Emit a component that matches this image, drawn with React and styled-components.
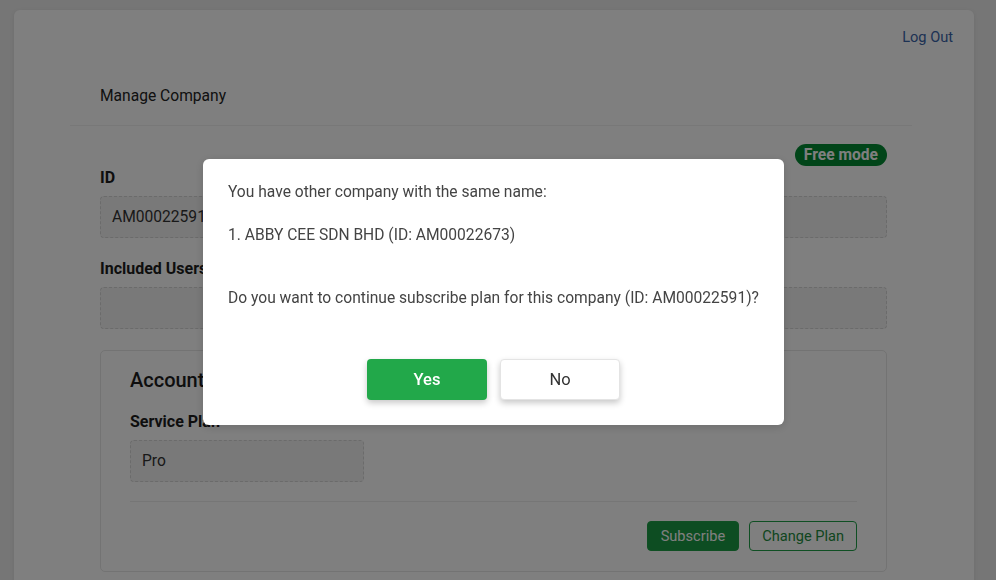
import React from 'react';
import styled, { createGlobalStyle } from 'styled-components';

const GlobalStyle = createGlobalStyle`
  html, body {
    margin: 0;
    padding: 0;
    background: #ececec;
    font-family: Roboto, "Liberation Sans", Arial, sans-serif;
    color: #222;
  }
`;

export default function App() {
  return (
    <>
      <GlobalStyle />
      <Page>
        <MainCard>
          <TopBar>
            <LogOut href="#">Log Out</LogOut>
          </TopBar>
          <Section>
            <SectionHeader>Manage Company</SectionHeader>
            <SectionBody>
              <BadgeRow>
                <Badge>Free mode</Badge>
              </BadgeRow>
              <Field>
                <Label>ID</Label>
                <ReadOnly>AM00022591</ReadOnly>
              </Field>
              <Field>
                <Label>Included Users</Label>
                <ReadOnly />
              </Field>
              <AccountCard>
                <CardTitle>Account</CardTitle>
                <Field>
                  <Label>Service Plan</Label>
                  <ReadOnly narrow>Pro</ReadOnly>
                </Field>
                <CardFooter>
                  <SmallButton solid>Subscribe</SmallButton>
                  <SmallButton>Change Plan</SmallButton>
                </CardFooter>
              </AccountCard>
            </SectionBody>
          </Section>
        </MainCard>
      </Page>

      <Backdrop>
        <Dialog>
          <Message>You have other company with the same name:</Message>
          <Message>1. ABBY CEE SDN BHD (ID: AM00022673)</Message>
          <Message gap>Do you want to continue subscribe plan for this company (ID: AM00022591)?</Message>
          <DialogActions>
            <DialogButton primary>Yes</DialogButton>
            <DialogButton>No</DialogButton>
          </DialogActions>
        </Dialog>
      </Backdrop>
    </>
  );
}

const Page = styled.div`
  padding: 10px 22px 0 14px;
  height: 580px;
  box-sizing: border-box;
  overflow: hidden;
`;

const MainCard = styled.div`
  background: #fff;
  border-radius: 6px;
  box-shadow: 0 1px 4px rgba(0, 0, 0, 0.08);
  min-height: 620px;
`;

const TopBar = styled.div`
  display: flex;
  justify-content: flex-end;
  padding: 17px 21px 0 0;
  height: 38px;
`;

const LogOut = styled.a`
  font-size: 14.6px;
  color: #3a64a8;
  text-decoration: none;
  line-height: 20px;
`;

const Section = styled.div`
  margin: 0 62px 0 56px;
`;

const SectionHeader = styled.div`
  padding: 21px 30px 19px;
  font-size: 15.6px;
  line-height: 20px;
  color: #222;
  border-bottom: 1px solid #f0f0f0;
`;

const SectionBody = styled.div`
  padding: 18px 25px 0 30px;
`;

const BadgeRow = styled.div`
  display: flex;
  justify-content: flex-end;
  height: 22px;
  margin-bottom: 2px;
`;

const Badge = styled.span`
  background: #038a33;
  color: #fff;
  font-weight: 700;
  font-size: 15.6px;
  line-height: 22px;
  padding: 0 9px;
  border-radius: 11px;
`;

const Field = styled.div`
  display: flex;
  flex-direction: column;
  margin-bottom: 21px;
`;

const Label = styled.label`
  font-size: 16px;
  font-weight: 700;
  line-height: 20px;
  color: #1d1d1d;
  margin-bottom: 8px;
`;

const ReadOnly = styled.div`
  box-sizing: border-box;
  height: 42px;
  width: ${p => (p.narrow ? '234px' : '100%')};
  background: #f3f3f3;
  border: 1px dashed #d6d6d6;
  border-radius: 4px;
  padding: 0 11px;
  display: flex;
  align-items: center;
  font-size: 15.6px;
  color: #333;
`;

const AccountCard = styled.div`
  border: 1px solid #e6e6e6;
  border-radius: 5px;
  padding: 17px 29px 20px;
`;

const CardTitle = styled.h2`
  margin: 0 0 20px;
  font-size: 20px;
  font-weight: 500;
  line-height: 24px;
  color: #1d1d1d;
`;

const CardFooter = styled.div`
  display: flex;
  justify-content: flex-end;
  gap: 10px;
  border-top: 1px solid #ececec;
  padding-top: 19px;
  margin-top: -2px;
`;

const SmallButton = styled.button`
  font-family: inherit;
  font-size: 14.6px;
  height: 30px;
  padding: 0 ${p => (p.solid ? '13px' : '12px')};
  border-radius: 4px;
  border: 1px solid #1e9e46;
  background: ${p => (p.solid ? '#1a9a44' : '#fff')};
  color: ${p => (p.solid ? '#fff' : '#1e8c40')};
`;

const Backdrop = styled.div`
  position: fixed;
  inset: 0;
  background: rgba(0, 0, 0, 0.5);
  display: flex;
  align-items: center;
  justify-content: center;
  padding-right: 9px;
  padding-top: 3px;
`;

const Dialog = styled.div`
  width: 581px;
  box-sizing: border-box;
  background: #fff;
  border-radius: 6px;
  padding: 23px 20px 25px 25px;
  box-shadow: 0 2px 10px rgba(0, 0, 0, 0.15);
`;

const Message = styled.p`
  margin: ${p => (p.gap ? '42px 0 0' : '0 0 22px')};
  font-size: 15.6px;
  line-height: 21px;
  color: #444;
  white-space: nowrap;
`;

const DialogActions = styled.div`
  display: flex;
  justify-content: center;
  gap: 13px;
  margin-top: 50px;
  padding-right: 5px;
`;

const DialogButton = styled.button`
  font-family: inherit;
  width: 120px;
  height: 41px;
  font-size: 16.5px;
  font-weight: ${p => (p.primary ? 500 : 400)};
  border-radius: 4px;
  border: ${p => (p.primary ? 'none' : '1px solid #e4e4e4')};
  background: ${p => (p.primary ? '#22a84a' : '#fff')};
  color: ${p => (p.primary ? '#fff' : '#333')};
  box-shadow: 0 3px 6px rgba(0, 0, 0, 0.22);
`;
